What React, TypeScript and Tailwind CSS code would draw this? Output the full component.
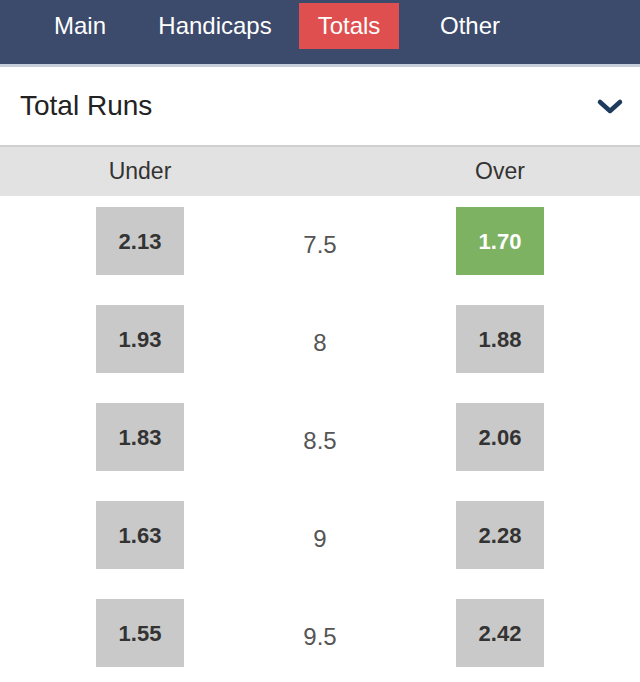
import React from "react";

// Tabs along the top bar
const tabs = [
  { label: "Main", ml: "ml-[30px]" },
  { label: "Handicaps", ml: "ml-[35px]" },
  { label: "Totals", ml: "ml-[34px]", active: true },
  { label: "Other", ml: "ml-[21px]" },
];

// Lines of the totals market
const lines = [
  { under: "2.13", line: "7.5", over: "1.70", hot: true },
  { under: "1.93", line: "8", over: "1.88" },
  { under: "1.83", line: "8.5", over: "2.06" },
  { under: "1.63", line: "9", over: "2.28" },
  { under: "1.55", line: "9.5", over: "2.42" },
];

const OddsBox = ({ value, hot = false }: { value: string; hot?: boolean }) => (
  <div
    className={`mt-[11px] w-[88px] h-[68px] flex items-center justify-center text-[22px] font-bold ${
      hot ? "bg-[#7db263] text-white" : "bg-[#c9c9c9] text-[#333333]"
    }`}
  >
    {value}
  </div>
);

export default function App() {
  return (
    <div className="w-[640px] h-[682px] overflow-hidden bg-white font-[family-name:'Liberation_Sans',Arial,sans-serif]">
      <nav className="h-[67px] bg-[#3c4a6b] flex items-start pt-[3px] border-b-[3px] border-[#c6cedb]">
        {tabs.map((t) => (
          <div
            key={t.label}
            className={`${t.ml} w-[100px] h-[46px] flex items-center justify-center text-[24px] whitespace-nowrap text-white ${
              t.active ? "bg-[#df4f4f]" : ""
            }`}
          >
            {t.label}
          </div>
        ))}
      </nav>

      <div className="h-[80px] flex items-center justify-between pl-[20px] pr-[16px] border-b-2 border-[#cfcfcf]">
        <span className="text-[28px] text-[#222222]">Total Runs</span>
        <svg width="28" height="18" viewBox="0 0 28 18" className="mt-[1px]">
          <polyline
            points="4,4 14,13 24,4"
            fill="none"
            stroke="#1e3a5c"
            strokeWidth="4.5"
            strokeLinecap="round"
            strokeLinejoin="round"
          />
        </svg>
      </div>

      <div className="h-[49px] bg-[#e2e2e2] grid grid-cols-[280px_80px_280px] items-center text-[23px] text-[#333333]">
        <span className="text-center">Under</span>
        <span />
        <span className="text-center">Over</span>
      </div>

      {lines.map((l) => (
        <div key={l.line} className="h-[98px] grid grid-cols-[280px_80px_280px] items-start">
          <div className="flex justify-center">
            <OddsBox value={l.under} />
          </div>
          <div className="mt-[15px] h-[68px] flex items-center justify-center text-[24px] text-[#555555]">
            {l.line}
          </div>
          <div className="flex justify-center">
            <OddsBox value={l.over} hot={l.hot} />
          </div>
        </div>
      ))}
    </div>
  );
}
